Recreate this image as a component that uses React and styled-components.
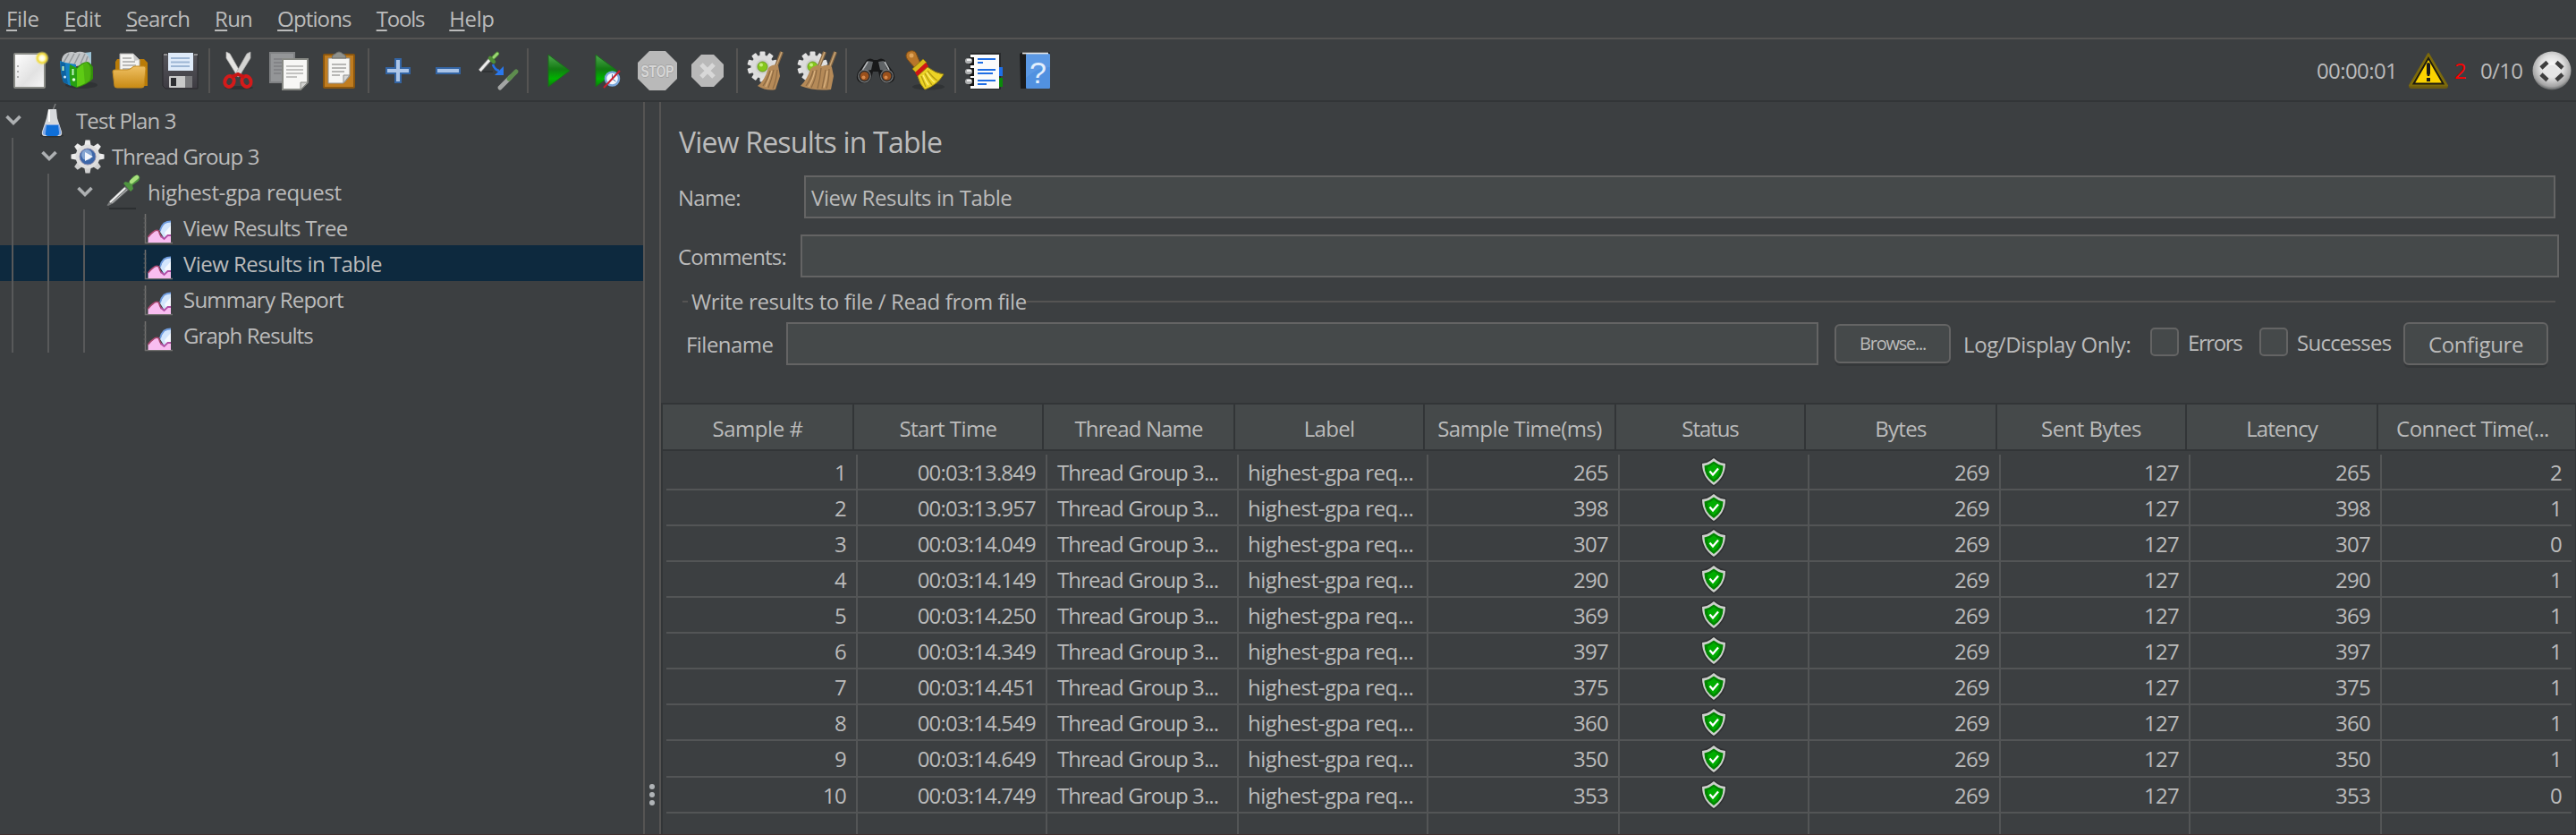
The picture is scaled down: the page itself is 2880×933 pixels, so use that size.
import React from "react";
import styled, { createGlobalStyle } from "styled-components";

const c = {
  bg: "#3c3f41",
  field: "#45494a",
  fieldLine: "#646464",
  line: "#555453",
  dark: "#323537",
  grid: "#535556",
  text: "#bbbbbb",
  select: "#0d293e",
};

const Global = createGlobalStyle`
  * { box-sizing: border-box; }
  html, body { margin: 0; background: ${c.bg}; }
  body { font: 24px/32px "Open Sans", "Noto Sans", sans-serif; color: ${c.text}; overflow: hidden; }
`;

/* ---------- frame ---------- */
const Window = styled.div`
  width: 2880px;
  height: 933px;
  display: flex;
  flex-direction: column;
  background: ${c.bg};
  border-bottom: 1px solid #40302f;
  overflow: hidden;
`;

const Text = styled.span`
  white-space: pre;
  letter-spacing: ${(p) => p.$track || 0}px;
`;

/* ---------- menu ---------- */
const MenuBar = styled.nav`
  height: 44px;
  display: flex;
  gap: 28px;
  padding-left: 7px;
  border-bottom: 2px solid ${c.line};
  flex: none;
`;
const MenuItem = styled(Text)`
  line-height: 42px;
  &::first-letter {
    text-decoration: underline;
    text-decoration-thickness: 2px;
    text-underline-offset: 3px;
    text-decoration-skip-ink: none;
  }
  display: block;
`;

/* ---------- toolbar ---------- */
const ToolBar = styled.div`
  height: 70px;
  flex: none;
  display: flex;
  align-items: center;
  padding: 1px 5px 0;
  border-bottom: 2px solid ${c.dark};
`;
const ToolButton = styled.span`
  width: 56px;
  height: 44px;
  display: flex;
  justify-content: center;
  svg { width: 44px; height: 44px; display: block; overflow: visible; }
`;
const ToolSeparator = styled.i`
  width: 2px;
  height: 50px;
  margin: 0 4px;
  background: ${c.line};
`;
const Status = styled.div`
  margin-left: auto;
  display: flex;
  align-items: center;
  svg { width: 44px; height: 44px; display: block; flex: none; }
`;
const StatusText = styled(Text)`
  width: ${(p) => p.$w}px;
  padding: 1px 0 0 ${(p) => p.$indent || 0}px;
  color: ${(p) => (p.$alert ? "#ff0000" : c.text)};
`;

/* ---------- body ---------- */
const Body = styled.div`
  flex: 1;
  display: flex;
  min-height: 0;
`;
const Tree = styled.div`
  width: 719px;
  flex: none;
`;
const TreeRow = styled.div`
  height: 40px;
  display: flex;
  align-items: center;
  background: ${(p) => (p.$selected ? c.select : "transparent")};
`;
const Guide = styled.i`
  width: 40px;
  height: 40px;
  flex: none;
  display: flex;
  padding-left: 13px;
  &::before { content: ""; width: 2px; background: #58595a; }
`;
const Chevron = styled.span`
  width: 38px;
  height: 40px;
  padding: 13px 0 0 5px;
  svg { width: 20px; height: 14px; display: block; }
`;
const TreeIcon = styled.span`
  width: 40px;
  height: 40px;
  margin-right: 7px;
  svg { width: 40px; height: 40px; display: block; overflow: visible; }
`;
const TreeLabel = styled(Text)`
  padding-top: 2px;
`;
const Divider = styled.div`
  width: 20px;
  flex: none;
  border-left: 2px solid ${c.line};
  border-right: 2px solid ${c.line};
  display: flex;
  flex-direction: column;
  align-items: center;
  justify-content: flex-end;
  gap: 3px;
  padding: 0 0 32px 0;
`;
const Dot = styled.i`
  width: 6px;
  height: 6px;
  border-radius: 50%;
  background: #b0b4b7;
`;

/* ---------- listener panel ---------- */
const Panel = styled.main`
  flex: 1;
  min-width: 0;
  display: flex;
  flex-direction: column;
`;
const Heading = styled.h1`
  margin: 0;
  height: 82px;
  padding: 23px 0 0 20px;
  font-size: 32px;
  line-height: 44px;
  font-weight: 400;
`;
const FormRow = styled.div`
  height: 48px;
  display: flex;
  align-items: center;
  margin: 0 ${(p) => p.$right}px ${(p) => p.$below}px ${(p) => p.$left || 19}px;
  flex: none;
`;
const FormLabel = styled(Text)`
  width: ${(p) => p.$w}px;
  padding-top: 2px;
  flex: none;
`;
const Field = styled.div`
  flex: 1;
  height: 48px;
  display: flex;
  align-items: center;
  border: 2px solid ${c.fieldLine};
  background: ${c.field};
  padding: 2px 6px 0;
`;
const GroupTitle = styled.div`
  height: 32px;
  margin: 11px 23px 7px 24px;
  display: flex;
  align-items: center;
  flex: none;
  &::before { content: ""; width: 6px; height: 2px; margin-right: 4px; background: ${c.line}; }
  &::after { content: ""; flex: 1; height: 2px; background: ${c.line}; }
`;
const Button = styled.button`
  width: ${(p) => p.$w}px;
  height: ${(p) => p.$h}px;
  margin-left: ${(p) => p.$gap || 0}px;
  padding: ${(p) => (p.$small ? 0 : 2)}px 0 0;
  border: 2px solid ${c.fieldLine};
  border-radius: 6px;
  background: ${c.field};
  box-shadow: 0 4px 0 -1px #35383a;
  color: ${c.text};
  font: inherit;
  font-size: ${(p) => (p.$small ? 20 : 24)}px;
  flex: none;
`;
const LogLabel = styled(FormLabel)`
  margin-left: 14px;
`;
const Check = styled.label`
  width: ${(p) => p.$w}px;
  display: flex;
  align-items: center;
  gap: 10px;
  margin-top: -4px;
  flex: none;
  span { padding-top: 2px; }
  &::before {
    content: "";
    width: 28px;
    height: 28px;
    border: 2px solid ${c.fieldLine};
    border-radius: 5px;
    background: ${c.field};
  }
`;

/* ---------- table ---------- */
const columns = "214px 212px 214px 212px 214px 212px 214px 212px 214px 1fr";
const Table = styled.div`
  flex: 1;
  min-height: 0;
  margin-top: 42px;
  border: 2px solid ${c.dark};
  border-right-width: 1px;
  border-bottom: 0;
  display: flex;
  flex-direction: column;
`;
const HeadRow = styled.div`
  height: 52px;
  display: grid;
  grid-template-columns: ${columns};
  background: ${c.field};
  border-bottom: 2px solid ${c.dark};
  flex: none;
`;
const HeadCell = styled.div`
  display: flex;
  justify-content: center;
  align-items: center;
  padding: 4px ${(p) => p.$pad || 0}px 0 0;
  &:not(:last-child) { border-right: 2px solid ${c.dark}; }
`;
const Rows = styled.div`
  margin: 4px 4px 0 4px;
  flex: 1;
  min-height: 0;
  display: flex;
  flex-direction: column;
`;
const Row = styled.div`
  height: ${(p) => p.$h}px;
  flex: none;
  display: grid;
  grid-template-columns: ${columns};
  border-bottom: 2px solid ${c.grid};
`;
const Cell = styled.div`
  display: flex;
  align-items: center;
  justify-content: ${(p) => (p.$align === "left" ? "flex-start" : p.$align === "center" ? "center" : "flex-end")};
  padding: ${(p) => (p.$align === "center" ? 0 : 1)}px ${(p) => (p.$align ? 0 : 11)}px 0 ${(p) => (p.$align === "left" ? p.$indent : 0)}px;
  &:not(:last-child) { border-right: 2px solid ${c.grid}; }
  svg { width: 30px; height: 34px; display: block; }
`;

/* ---------- icons ---------- */
const NewIcon = () => (
  <svg viewBox="0 0 44 44">
    <defs>
      <linearGradient id="pg" x1="0" y1="0" x2="1" y2="1"><stop offset="0" stopColor="#fff" /><stop offset=".6" stopColor="#e2e2e2" /><stop offset="1" stopColor="#f6f6f6" /></linearGradient>
      <radialGradient id="glow"><stop offset="0" stopColor="#fff" /><stop offset=".35" stopColor="#fffbd0" /><stop offset=".65" stopColor="#f0d935" /><stop offset="1" stopColor="#f5e56a" stopOpacity="0" /></radialGradient>
    </defs>
    <rect x="5" y="3" width="34" height="38" rx="1" fill="url(#pg)" stroke="#888a85" strokeWidth="2" />
    <path d="M8 17h2M8 23h2M8 29h2" stroke="#999" strokeWidth="1.5" />
    <circle cx="36" cy="8" r="8" fill="url(#glow)" />
  </svg>
);
const TemplatesIcon = () => (
  <svg viewBox="0 0 44 44">
    <ellipse cx="24" cy="38" rx="18" ry="4" fill="#303335" />
    <path d="M20 3l15-2v15l-12 5z" fill="#9cc3d6" />
    <path d="M2 13Q1 5 8 2q6-2 9 0 4-2 8-1 7 1 9 11l-3 3-13 2z" fill="#c3c6c8" />
    <path d="M4 13L10 3M10 14L16 3M16 15l6-12M23 14l5-11M29 12l2-6" stroke="#94989b" strokeWidth="1.500" />
    <path d="M0 11l6 2 12 2v10l-6 14-8-4Q1 28 0 11z" fill="#1580c4" />
    <path d="M1 12l5 2q0 12 3 23l-5-2Q1 27 1 12z" fill="#0e62a0" />
    <path d="M11 15l8 4v22l-7-3q-2-10-1-23z" fill="#27a012" />
    <path d="M19 19q5-7 12-7 3 1 6 6v13q-7 7-18 10z" fill="#338f0b" />
    <path d="M19 20q6-6 11-7l3 3q2 9 0 17-5 4-14 7z" fill="#5ecb14" />
    <path d="M26 15l5-2 4 5q1 8-1 15l-6 4z" fill="#47a80e" opacity=".7" />
    <path d="M14.500 20v7M3.500 17v5" stroke="#bff3c0" strokeWidth="2" />
    <circle cx="15.500" cy="32" r="1.800" fill="#e2ffe0" /><circle cx="5.500" cy="29" r="1.500" fill="#cfeaff" />
  </svg>
);
const OpenIcon = () => (
  <svg viewBox="0 0 44 44">
    <defs><linearGradient id="fold" x1="0" y1="0" x2="0" y2="1"><stop offset="0" stopColor="#efc063" /><stop offset="1" stopColor="#c88a14" /></linearGradient></defs>
    <path d="M6 12l2-3h30l4 4v26H6z" fill="#b97b07" />
    <path d="M11 3h15l7 7v16H11z" fill="#f4f4f2" stroke="#aaa" />
    <path d="M26 3l1 8 6-1z" fill="#c8c8c8" />
    <path d="M14 8h10M14 12h14M14 16h15M14 20h15" stroke="#a6a6a6" strokeWidth="1.6" />
    <path d="M3 23q0-2 2-2h14q3 0 5-2t4-2h10q2 0 2 3l-2 19q0 2-3 2H8q-3 0-3-2z" fill="url(#fold)" stroke="#c48a1c" />
  </svg>
);
const SaveIcon = () => (
  <svg viewBox="0 0 44 44">
    <defs><linearGradient id="flop" x1="0" y1="0" x2="0" y2="1"><stop offset="0" stopColor="#55555a" /><stop offset="1" stopColor="#3e3c43" /></linearGradient></defs>
    <path d="M3 3h39v39H6l-3-3z" fill="url(#flop)" stroke="#29292c" />
    <rect x="9" y="2" width="28" height="20" fill="#dfebf9" />
    <path d="M12 8h21M12 12.500h21M12 17h21" stroke="#9db6d4" strokeWidth="2" />
    <path d="M4 4h4M38 4h4" stroke="#aaa" strokeWidth="1.500" />
    <rect x="10" y="28" width="26" height="13" rx="1" fill="#c9c9c9" />
    <rect x="28" y="28" width="8" height="13" fill="#77777a" />
    <rect x="12" y="30" width="6" height="9" fill="#2d2d31" />
  </svg>
);
const CutIcon = () => (
  <svg viewBox="0 0 44 44">
    <ellipse cx="22" cy="41" rx="16" ry="2" fill="#2f3133" />
    <path d="M8 1l4 2 13 23-4 3L8 8z" fill="#e4e4e2" stroke="#b5b5b3" strokeWidth=".7" />
    <path d="M35 1l-4 2-13 23 4 3L35 8z" fill="#d4d4d2" stroke="#aaa" strokeWidth=".7" />
    <ellipse cx="11.500" cy="34" rx="5" ry="6" transform="rotate(20 11.500 34)" fill="none" stroke="#d41a1a" strokeWidth="4" />
    <ellipse cx="30.500" cy="34" rx="5" ry="6" transform="rotate(-20 30.500 34)" fill="none" stroke="#d41a1a" strokeWidth="4" />
    <path d="M14 29l7-3 7 3" stroke="#c81414" strokeWidth="4" fill="none" />
  </svg>
);
const CopyIcon = () => (
  <svg viewBox="0 0 44 44">
    <rect x="1" y="2" width="27" height="33" fill="#949698" stroke="#808284" strokeWidth="2" />
    <path d="M5 9h18M5 13h18M5 17h9M5 21h9M5 25h8" stroke="#7d7f81" strokeWidth="1.500" />
    <path d="M15 9h28v26l-8 8H15z" fill="#f7f7f5" stroke="#888a85" strokeWidth="2" />
    <path d="M43 35h-8v8z" fill="#d0d0ce" stroke="#888a85" />
    <path d="M19 17h19M19 21h19M19 25h19M19 29h12" stroke="#b2b2b0" strokeWidth="1.600" />
  </svg>
);
const PasteIcon = () => (
  <svg viewBox="0 0 44 44">
    <rect x="5" y="4" width="34" height="37" rx="1" fill="#c07d20" stroke="#8a560f" strokeWidth="2" />
    <path d="M10 8h24v20l-7 8H10z" fill="#f6f6f4" stroke="#8f8f8d" />
    <path d="M34 27h-7v9z" fill="#d6d6d4" stroke="#8f8f8d" />
    <path d="M14 15h16M14 19h16M14 23h14M14 27h9" stroke="#a2a2a0" strokeWidth="1.600" />
    <path d="M14 8q0-4 4-5 4-4 8 0 4 1 4 5z" fill="#8f918c" stroke="#6b6d69" />
  </svg>
);
const PlusIcon = () => (
  <svg viewBox="0 0 44 44">
    <path d="M19 9h6v10h10v6H25v10h-6V25H9v-6h10z" fill="#adc6e8" stroke="#3465a4" strokeWidth="2" />
  </svg>
);
const MinusIcon = () => (
  <svg viewBox="0 0 44 44">
    <rect x="9" y="19" width="26" height="6" fill="#a9c3e7" stroke="#3465a4" strokeWidth="2" />
  </svg>
);
const ToggleIcon = () => (
  <svg viewBox="0 0 44 44">
    <path d="M4 23h12" stroke="#2f3234" strokeWidth="2" />
    <path d="M1.500 22L14 8" stroke="#777" strokeWidth="4.500" />
    <path d="M1.500 22L14 8" stroke="#eee" strokeWidth="2.800" />
    <path d="M13 8l4 4M15 9L21 3" stroke="#4f8d36" strokeWidth="4.500" strokeLinecap="round" />
    <path d="M17 7l4-4" stroke="#9bd673" strokeWidth="3" strokeLinecap="round" />
    <path d="M16 15q2 6 7 7" stroke="#2473e8" strokeWidth="2.500" fill="none" />
    <path d="M28 17v10H18z" fill="#2a78ee" />
    <path d="M24 41L36 29" stroke="#a3a5a4" strokeWidth="5" strokeLinecap="round" />
    <path d="M34 31l8-8" stroke="#5e8d4e" strokeWidth="5" strokeLinecap="round" />
  </svg>
);
const greens = (
  <linearGradient id="play" x1="0" y1="0" x2="0" y2="1"><stop offset="0" stopColor="#4fa94f" /><stop offset=".45" stopColor="#137a13" /><stop offset=".75" stopColor="#00b400" /><stop offset="1" stopColor="#0a7d0a" /></linearGradient>
);
const PlayIcon = () => (
  <svg viewBox="0 0 44 44">
    <defs>{greens}</defs>
    <path d="M12 4l24 18-24 18z" fill="url(#play)" stroke="#1b6b1b" />
  </svg>
);
const PlayNoTimersIcon = () => (
  <svg viewBox="0 0 44 44">
    <path d="M9 4l24 18L9 40z" fill="url(#play)" stroke="#1b6b1b" />
    <circle cx="27.500" cy="31" r="7.500" fill="#f5f9ff" stroke="#7aa7dc" strokeWidth="2.500" />
    <path d="M27.500 31v-5M27.500 31l4 3" stroke="#4a6fa5" />
    <path d="M18 41L36 22" stroke="#c81f2b" strokeWidth="2" />
  </svg>
);
const StopIcon = () => (
  <svg viewBox="0 0 44 44">
    <path d="M13 0h18l13 13v18L31 44H13L0 31V13z" fill="#b9b9b9" />
    <text x="22" y="29" textAnchor="middle" textLength="37" lengthAdjust="spacingAndGlyphs" fontFamily="Liberation Sans" fontWeight="700" fontSize="19" fill="#d6d6d6" stroke="#a2a2a2" strokeWidth="1.600" paintOrder="stroke">STOP</text>
  </svg>
);
const ShutdownIcon = () => (
  <svg viewBox="0 0 44 44">
    <path d="M15 4h14l11 11v14L29 40H15L4 29V15z" fill="#b9b9b9" />
    <path d="M15 15l14 14M29 15L15 29" stroke="#d8d8d8" strokeWidth="5" />
  </svg>
);
const teeth = Array.from({ length: 10 }, (_, i) => i * 36);
const CogGear = () => (
  <g transform="translate(17.500 17.500)">
    {teeth.map((a) => <rect key={a} x="-3" y="-17" width="6" height="8" rx="1" fill="#e2e2e2" transform={`rotate(${a})`} />)}
    <circle r="13" fill="#dcdcdc" />
    <circle r="8" fill="#cfcfcf" />
    <circle r="5.500" fill="#86c81c" stroke="#6a9c22" />
    <circle cx="-1.500" cy="-2" r="2" fill="#c6ee7c" />
  </g>
);
const ClearIcon = () => (
  <svg viewBox="0 0 44 44">
    <CogGear />
    <path d="M39 1l-7 18" stroke="#8a6a45" strokeWidth="4" />
    <path d="M39 1l-7 18" stroke="#c9a677" strokeWidth="1.500" />
    <path d="M24 19q4-5 11-3l2 12-5 15q-10 2-20-4 8-6 12-20z" fill="#b58a58" />
    <path d="M26 22q-3 10-8 17M30 21q-2 10-6 20M34 21q-1 12-5 21" stroke="#8d6a43" strokeWidth="1.200" fill="none" />
    <path d="M28 22q-3 10-7 18" stroke="#dcb583" strokeWidth="1.200" fill="none" />
  </svg>
);
const ClearAllIcon = () => (
  <svg viewBox="0 0 44 44">
    <CogGear />
    <path d="M31 1l-7 18M43 1l-7 18" stroke="#8a6a45" strokeWidth="4" />
    <path d="M31 1l-7 18M43 1l-7 18" stroke="#c9a677" strokeWidth="1.500" />
    <path d="M15 20q7-6 13-3 8-3 11 1l2 10-3 15q-18 2-34-4 8-8 11-19z" fill="#b58a58" />
    <path d="M18 22q-2 9-8 17M22 21q-1 10-6 20M27 19q-1 12-4 23M32 21q-2 10-4 21M36 20q0 12-3 22" stroke="#8d6a43" strokeWidth="1.200" fill="none" />
    <path d="M20 22q-2 10-7 18M34 22q-1 10-4 19" stroke="#dcb583" strokeWidth="1.200" fill="none" />
  </svg>
);
const SearchIcon = () => (
  <svg viewBox="0 0 44 44">
    <path d="M12 10q4-3 8 0h4q4-3 8 0l10 14q4 10-6 12-9 0-10-9l-1-4h-6l-1 4q-1 9-10 9-10-2-6-12z" fill="#18191a" />
    <path d="M13 11l6 1-2 9-9 2zM31 11l-6 1 2 9 9 2z" fill="#606467" />
    <path d="M13 12l-6 10M32 12l5 9" stroke="#b7babc" strokeWidth="1.600" />
    <circle cx="9.500" cy="28" r="6.800" fill="#2c2d2e" stroke="#77797a" strokeWidth="1.200" />
    <circle cx="34.500" cy="28" r="6.800" fill="#2c2d2e" stroke="#77797a" strokeWidth="1.200" />
    <circle cx="9.500" cy="28" r="4.800" fill="#9a501c" /><circle cx="34.500" cy="28" r="4.800" fill="#9a501c" />
    <circle cx="8.500" cy="29.500" r="2" fill="#d8894a" /><circle cx="33.500" cy="29.500" r="2" fill="#d8894a" />
  </svg>
);
const SearchResetIcon = () => (
  <svg viewBox="0 0 44 44">
    <ellipse cx="25" cy="40" rx="18" ry="3.500" fill="#303335" />
    <path d="M2 1q6-3 9 1l5 12-6 5-8-9q-4-5 0-9z" fill="#b8762a" stroke="#7d4c15" />
    <circle cx="6" cy="5" r="2.500" fill="#dfa45a" />
    <path d="M7 20L19 9l4 4-12 11z" fill="#d8bb1b" stroke="#8f7a0c" />
    <path d="M10 24l12-11 3 4-12 12z" fill="#cf1616" />
    <path d="M13 28l11-10q9 7 18 8-7 12-21 17-6-6-8-15z" fill="#ecd325" stroke="#9a8510" />
    <path d="M17 28q3 7 5 12M21 25q4 8 8 13M24 22q6 8 11 11" stroke="#b59c12" strokeWidth="1.300" fill="none" />
    <path d="M19 27q3 7 6 11M23 24q5 8 9 11" stroke="#fff07a" strokeWidth="1.300" fill="none" />
  </svg>
);
const ListIcon = () => (
  <svg viewBox="0 0 44 44">
    <rect x="6" y="2" width="34" height="41" fill="#292b2c" />
    <rect x="38" y="18" width="4" height="10" fill="#1e6fe8" /><rect x="38" y="30" width="4" height="10" fill="#0a8a0a" />
    <rect x="6" y="4" width="32" height="38" fill="#fbfbfb" />
    <path d="M14 9h20M14 21h20M14 33h20" stroke="#1f6ee4" strokeWidth="2" />
    <path d="M14 13h6M14 25h17M14 37h10" stroke="#1f6ee4" strokeWidth="2" />
    {[11, 23, 34].map((y) => (
      <g key={y}><rect x="5" y={y - 4} width="5" height="9" fill="#151515" /><rect x="0" y={y - 3} width="8" height="6" rx="3" fill="#aeb0b1" /><rect x="2" y={y - 2} width="5" height="2" fill="#f0f0f0" /></g>
    ))}
  </svg>
);
const HelpIcon = () => (
  <svg viewBox="0 0 44 44">
    <path d="M5 3l4-2h29l1 2v39H6z" fill="#1a1b1c" />
    <rect x="12" y="3" width="27" height="39" rx="1" fill="#5191e0" />
    <path d="M12 4h27v14q-14 0-27 12z" fill="#6aa3e8" opacity=".45" />
    <path d="M8 2.500h29" stroke="#e6e6e6" strokeWidth="1.800" />
    <text x="25.500" y="36" textAnchor="middle" fontFamily="Liberation Sans" fontSize="34" fill="#e3effc">?</text>
  </svg>
);
const WarningIcon = () => (
  <svg viewBox="0 0 44 44">
    <path d="M0 39q0 3 3 3h38q3 0 3-3z" fill="#6b5a10" />
    <path d="M22 3L43 38.500H1z" fill="#8d7908" stroke="#7b690c" strokeWidth="2" strokeLinejoin="round" />
    <path d="M22 8L38.500 36.500h-33z" fill="#fbd300" stroke="#1c1a10" strokeWidth="2" />
    <path d="M22 15v10" stroke="#1a1a1a" strokeWidth="4" strokeLinecap="round" />
    <path d="M22 24v4" stroke="#1a1a1a" strokeWidth="2.500" />
    <rect x="20" y="30" width="4" height="4" fill="#1a1a1a" />
  </svg>
);
const StateIcon = () => (
  <svg viewBox="0 0 44 44">
    <defs><radialGradient id="ball" cx=".5" cy=".4" r=".6"><stop offset="0" stopColor="#fff" /><stop offset=".5" stopColor="#dedede" /><stop offset=".85" stopColor="#a5a5a5" /><stop offset="1" stopColor="#5c5f60" /></radialGradient></defs>
    <circle cx="22" cy="22" r="21.500" fill="url(#ball)" />
    <path d="M10 19l7-6.500M27 12.500l7 6.500M10 26l7 6.500M27 32.500l7-6.500" fill="none" stroke="#3e3e3e" strokeWidth="4.600" />
    <circle cx="22" cy="22.500" r="7" fill="#e6e6e6" />
  </svg>
);
const ChevronIcon = () => (
  <svg viewBox="0 0 20 14"><path d="M2.500 3L10 10.500 17.500 3" fill="none" stroke="#adb0b2" strokeWidth="3.600" /></svg>
);
const FlaskIcon = () => (
  <svg viewBox="0 0 40 40">
    <ellipse cx="20" cy="37.500" rx="13" ry="2" fill="#2d3032" />
    <path d="M20 12l4-10" stroke="#77797a" strokeWidth="1.600" />
    <path d="M16 8h9l1 10 5 15q1 5-3 5H12q-4 0-3-5l5-15z" fill="#d6d9dc" />
    <path d="M13 25h15l2 8q1 4-3 4H13q-4 0-3-4z" fill="#7fa8e8" />
    <path d="M14 26h13l1 8q0 4-3 4h-9q-4 0-3-4z" fill="#0f6fd8" />
    <path d="M17 9v13" stroke="#fff" strokeWidth="2" />
  </svg>
);
const GearIcon = () => (
  <svg viewBox="0 0 40 40">
    <g transform="translate(20 21)">
      {[0, 45, 90, 135, 180, 225, 270, 315].map((a) => <path key={a} d="M-4-11l1.500-7.500h5L4-11z" fill={a > 90 && a < 270 ? "#cfcfcf" : "#ececec"} transform={`rotate(${a})`} />)}
      <circle r="13.500" fill="#dedede" />
      <circle r="9" fill="#3c66a8" stroke="#88a" strokeWidth="1" />
      <circle cx="-1" cy="-2" r="6" fill="#86a6d2" />
      <path d="M-3-5L6 0l-9 5z" fill="#f2f6fc" />
    </g>
  </svg>
);
const DropperIcon = () => (
  <svg viewBox="0 0 40 40">
    <path d="M4 39h30" stroke="#2c2f31" strokeWidth="2" />
    <path d="M1.500 35.500L5 30 22 14l4 4L9 33l-6 3z" fill="#77797a" />
    <path d="M5 32L22 16" stroke="#f2f2f2" strokeWidth="2" />
    <path d="M7 33L24 18" stroke="#b9bbbb" strokeWidth="1" />
    <path d="M20 11l8 9 3-3-1-4 7-5q3-5-1-6-4-1-7 3l-3 5-4-1z" fill="#4f9440" />
    <path d="M29 9l6-5" stroke="#a9e07e" strokeWidth="4.500" strokeLinecap="round" />
  </svg>
);
const GraphIcon = () => (
  <svg viewBox="0 0 40 40">
    <path d="M4.500 5v32.500H35" stroke="#72706f" strokeWidth="1.500" fill="none" />
    <path d="M2.500 10h3M2.500 15h3M2.500 20h3M2.500 25h3M2.500 30h3" stroke="#5f6061" />
    <path d="M21 25q1-5 4.500-9 3-2.500 7.500-2.500V32l-7 1z" fill="#d3e6fd" />
    <path d="M21 24q1-5 4.500-8.500 3-2 7.500-2" fill="none" stroke="#6f9de0" strokeWidth="1.800" />
    <path d="M26 26l7-8v12l-5 2z" fill="#f4f9ff" />
    <path d="M7.500 37v-6q3-4 6-6 3-3 6-1 1 4 3 7l3 2 4-4 3.500 0v8z" fill="#f8bdf0" />
    <path d="M7.500 31q3-4 6-6 3-3 6-1 1 4 3 7" stroke="#a8486f" strokeWidth="1.600" fill="none" />
    <path d="M22 30l3.500 3 4-4H33" stroke="#b24fa6" strokeWidth="1.800" fill="none" />
  </svg>
);
const ShieldIcon = () => (
  <svg viewBox="0 0 30 34">
    <path d="M15 0l5 4 9 3q2 16-14 27Q-1 23 1 7l9-3z" fill="#2b2c2d" opacity=".7" />
    <path d="M15 2l4 3q4 3 9 3 0 15-13 24Q2 23 2 8q5 0 9-3z" fill="#cdd0cc" />
    <path d="M15 5.500q5 4 10.500 5 0 12-10.500 18.500Q4.500 22.500 4.500 10.500q5.500-1 10.500-5z" fill="#008400" />
    <path d="M15 8q3 3 7 4 0 9-7 14-7-6-7-14 4-1 7-4z" fill="#00ad00" />
    <path d="M10.500 16.500l3.500 4 6-7" fill="none" stroke="#fff" strokeWidth="2.300" />
  </svg>
);

/* ---------- data ---------- */
const menu = [["File", -0.33], ["Edit", -0.36], ["Search", -0.8], ["Run", -0.77], ["Options", -0.85], ["Tools", -1.2], ["Help", -0.41]];
const tools = [
  [NewIcon, TemplatesIcon, OpenIcon, SaveIcon],
  [CutIcon, CopyIcon, PasteIcon],
  [PlusIcon, MinusIcon, ToggleIcon],
  [PlayIcon, PlayNoTimersIcon, StopIcon, ShutdownIcon],
  [ClearIcon, ClearAllIcon],
  [SearchIcon, SearchResetIcon],
  [ListIcon, HelpIcon],
];
const tree = [
  { level: 0, icon: FlaskIcon, label: "Test Plan 3", track: -0.9, open: true },
  { level: 1, icon: GearIcon, label: "Thread Group 3", track: -0.86, open: true },
  { level: 2, icon: DropperIcon, label: "highest-gpa request", track: -0.34, open: true },
  { level: 3, icon: GraphIcon, label: "View Results Tree", track: -0.7 },
  { level: 3, icon: GraphIcon, label: "View Results in Table", track: -0.54, selected: true },
  { level: 3, icon: GraphIcon, label: "Summary Report", track: -0.76 },
  { level: 3, icon: GraphIcon, label: "Graph Results", track: -0.92 },
];
const heads = [
  ["Sample #", -0.45], ["Start Time", -0.57], ["Thread Name", -0.86], ["Label", -0.68], ["Sample Time(ms)", -0.56],
  ["Status", -1.06], ["Bytes", -0.71], ["Sent Bytes", -0.52], ["Latency", -0.92], ["Connect Time(...", -0.56, 9],
];
const samples = [
  ["13.849", 265, 2], ["13.957", 398, 1], ["14.049", 307, 0], ["14.149", 290, 1], ["14.250", 369, 1],
  ["14.349", 397, 1], ["14.451", 375, 1], ["14.549", 360, 1], ["14.649", 350, 1], ["14.749", 353, 0],
];

const NumberCell = ({ children }) => <Cell><Text $track={-0.75}>{children}</Text></Cell>;

export default function App() {
  return (
    <Window>
      <Global />
      <MenuBar>{menu.map(([m, t]) => <MenuItem key={m} $track={t}>{m}</MenuItem>)}</MenuBar>
      <ToolBar>
        {tools.map((group, g) => (
          <React.Fragment key={g}>
            {g > 0 && <ToolSeparator />}
            {group.map((Icon, i) => <ToolButton key={i}><Icon /></ToolButton>)}
          </React.Fragment>
        ))}
        <Status>
          <StatusText $w={103} $track={-0.6}>00:00:01</StatusText>
          <WarningIcon />
          <StatusText $w={36} $indent={7} $alert>2</StatusText>
          <StatusText $w={58} $track={-0.65}>0/10</StatusText>
          <StateIcon />
        </Status>
      </ToolBar>
      <Body>
        <Tree>
          {tree.map((n) => (
            <TreeRow key={n.label} $selected={n.selected}>
              {Array.from({ length: n.level }, (_, i) => <Guide key={i} />)}
              <Chevron>{n.open && <ChevronIcon />}</Chevron>
              <TreeIcon><n.icon /></TreeIcon>
              <TreeLabel $track={n.track}>{n.label}</TreeLabel>
            </TreeRow>
          ))}
        </Tree>
        <Divider><Dot /><Dot /><Dot /></Divider>
        <Panel>
          <Heading><Text $track={-0.8}>View Results in Table</Text></Heading>
          <FormRow $right={23} $below={18}>
            <FormLabel $w={141} $track={-0.7}>Name:</FormLabel>
            <Field><Text $track={-0.42}>View Results in Table</Text></Field>
          </FormRow>
          <FormRow $right={19} $below={0}>
            <FormLabel $w={137} $track={-0.85}>Comments:</FormLabel>
            <Field />
          </FormRow>
          <GroupTitle><Text $track={-0.38}>Write results to file / Read from file</Text></GroupTitle>
          <FormRow $left={28} $right={31} $below={0}>
            <FormLabel $w={112} $track={-0.54}>Filename</FormLabel>
            <Field />
            <Button $w={130} $h={44} $gap={18} $small><Text $track={-1.25}>Browse...</Text></Button>
            <LogLabel $w={209} $track={-0.38}>Log/Display Only:</LogLabel>
            <Check $w={122}><Text $track={-1.4}>Errors</Text></Check>
            <Check $w={161}><Text $track={-0.75}>Successes</Text></Check>
            <Button $w={162} $h={48}><Text $track={-0.37}>Configure</Text></Button>
          </FormRow>
          <Table>
            <HeadRow>{heads.map(([h, t, pad]) => <HeadCell key={h} $pad={pad}><Text $track={t}>{h}</Text></HeadCell>)}</HeadRow>
            <Rows>
              {samples.map(([time, ms, connect], i) => (
                <Row key={time} $h={i === 8 ? 41 : 40}>
                  <NumberCell>{i + 1}</NumberCell>
                  <Cell><Text $track={-0.84}>{`00:03:${time}`}</Text></Cell>
                  <Cell $align="left" $indent={11}><Text $track={-0.9}>Thread Group 3...</Text></Cell>
                  <Cell $align="left" $indent={10}><Text $track={-0.48}>highest-gpa req...</Text></Cell>
                  <NumberCell>{ms}</NumberCell>
                  <Cell $align="center"><ShieldIcon /></Cell>
                  <NumberCell>269</NumberCell>
                  <NumberCell>127</NumberCell>
                  <NumberCell>{ms}</NumberCell>
                  <NumberCell>{connect}</NumberCell>
                </Row>
              ))}
              <Row $h={40}>{heads.map(([h]) => <Cell key={h} />)}</Row>
            </Rows>
          </Table>
        </Panel>
      </Body>
    </Window>
  );
}
